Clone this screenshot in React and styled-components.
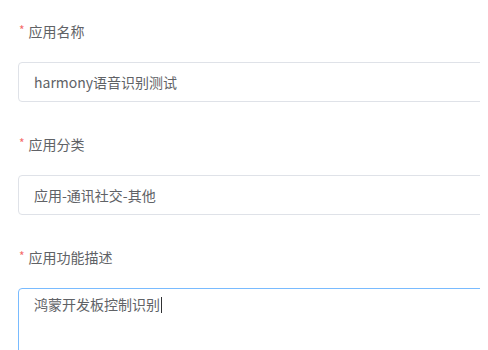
import React from 'react';
import styled, { createGlobalStyle } from 'styled-components';

const GlobalStyle = createGlobalStyle`
  html, body {
    margin: 0;
    padding: 0;
    background: #fff;
  }
  body {
    font-family: 'Noto Sans CJK SC', 'Noto Sans', sans-serif;
    overflow: hidden;
  }
`;

const Page = styled.div`
  width: 480px;
  height: 350px;
  overflow: hidden;
  padding: 21px 0 0 18px;
  box-sizing: border-box;
  display: flex;
  flex-direction: column;
  gap: 32px;
`;

const FormItem = styled.div`
  display: flex;
  flex-direction: column;
  gap: 21px;
`;

const Label = styled.label`
  display: flex;
  align-items: center;
  height: 20px;
  font-size: 14px;
  color: #606266;
  &::before {
    content: '*';
    color: #f56c6c;
    margin-right: 4px;
    margin-left: 1px;
    font-size: 12px;
    line-height: 1;
    position: relative;
    top: -1px;
  }
`;

const InputBox = styled.div`
  width: 520px;
  height: ${({ $multiline }) => ($multiline ? '120px' : '40px')};
  box-sizing: border-box;
  border: 1px solid ${({ $focused }) => ($focused ? '#79bbff' : '#dfe2e8')};
  border-radius: 4px;
  padding: ${({ $multiline }) => ($multiline ? '5px 15px' : '0 15px')};
  display: flex;
  align-items: ${({ $multiline }) => ($multiline ? 'flex-start' : 'center')};
  font-size: 14px;
  line-height: ${({ $multiline }) => ($multiline ? '21px' : '38px')};
  color: #606266;
  background: #fff;
`;

const Caret = styled.span`
  display: inline-block;
  width: 1px;
  height: 16px;
  background: #303133;
  margin-left: 1px;
  margin-top: 3px;
`;

const fields = [
  { label: '应用名称', value: 'harmony语音识别测试' },
  { label: '应用分类', value: '应用-通讯社交-其他' },
  { label: '应用功能描述', value: '鸿蒙开发板控制识别', multiline: true },
];

const App = () => (
  <>
    <GlobalStyle />
    <Page>
      {fields.map(f => (
        <FormItem key={f.label}>
          <Label>{f.label}</Label>
          <InputBox $multiline={f.multiline} $focused={f.multiline}>
            {f.value}
            {f.multiline && <Caret />}
          </InputBox>
        </FormItem>
      ))}
    </Page>
  </>
);

export default App;
